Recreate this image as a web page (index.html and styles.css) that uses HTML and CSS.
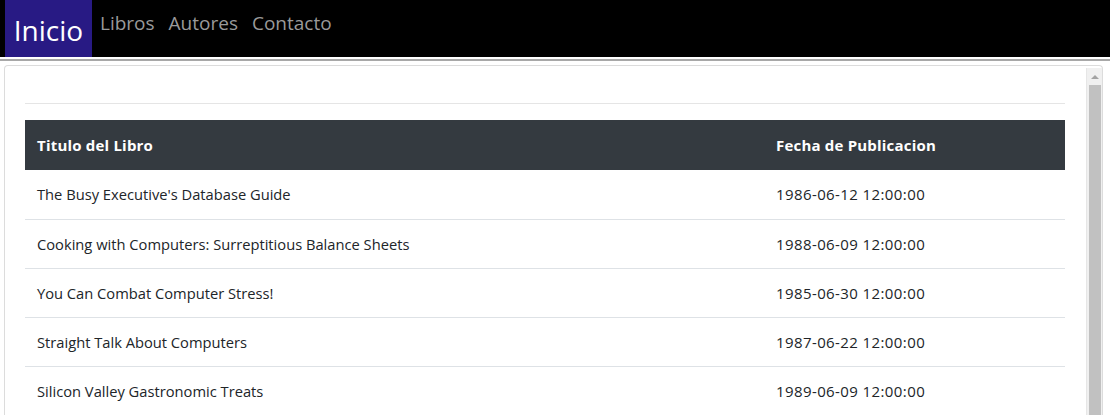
FILE: index.html
```html
<!DOCTYPE html>
<html lang="es">
<head>
<meta charset="utf-8">
<title>Libros</title>
<link rel="stylesheet" href="styles.css">
</head>
<body>
<nav class="nav">
  <a class="nav-home" href="#">Inicio</a>
  <a class="nav-link" href="#">Libros</a>
  <a class="nav-link" href="#">Autores</a>
  <a class="nav-link" href="#">Contacto</a>
</nav>
<div class="sep"></div>
<div class="frame">
  <div class="frame-content">
    <hr class="rule">
    <table class="books">
      <thead>
        <tr><th class="col-title">Titulo del Libro</th><th>Fecha de Publicacion</th></tr>
      </thead>
      <tbody>
        <tr><td>The Busy Executive's Database Guide</td><td class="date">1986-06-12 12:00:00</td></tr>
        <tr><td>Cooking with Computers: Surreptitious Balance Sheets</td><td class="date">1988-06-09 12:00:00</td></tr>
        <tr><td>You Can Combat Computer Stress!</td><td class="date">1985-06-30 12:00:00</td></tr>
        <tr><td>Straight Talk About Computers</td><td class="date">1987-06-22 12:00:00</td></tr>
        <tr><td>Silicon Valley Gastronomic Treats</td><td class="date">1989-06-09 12:00:00</td></tr>
      </tbody>
    </table>
  </div>
  <div class="scrollbar">
    <div class="sb-btn"><span class="sb-arrow"></span></div>
    <div class="sb-thumb"></div>
  </div>
</div>
</body>
</html>
```

FILE: styles.css
```css
html, body {
  margin: 0;
  padding: 0;
  background: #fff;
  height: 415px;
  overflow: hidden;
}
body {
  font-family: "Open Sans", "Noto Sans", sans-serif;
  color: #212529;
}
.nav {
  display: flex;
  align-items: flex-start;
  height: 57px;
  background: #000;
  padding-left: 5px;
}
.nav-home {
  display: block;
  width: 87px;
  height: 57px;
  box-sizing: border-box;
  padding: 13px 0 0 0;
  text-align: center;
  background: #281a84;
  color: #fff;
  font-size: 28px;
  line-height: 34px;
  text-decoration: none;
}
.nav-link {
  display: block;
  margin-left: 8px;
  margin-right: 6px;
  padding-top: 9px;
  color: #9a9a9a;
  font-size: 19px;
  line-height: 28px;
  text-decoration: none;
}
.sep {
  height: 2px;
  margin-top: 2px;
  background: #a8a8a8;
}
.frame {
  display: flex;
  margin: 4px 7px 0 4px;
  height: 349px;
  border: 1px solid #dcdcdc;
  border-bottom: 0;
  border-radius: 4px 4px 0 0;
  overflow: hidden;
}
.frame-content {
  flex: 1;
  padding: 0 21px 0 20px;
  overflow: hidden;
}
.rule {
  margin: 37px 0 16px 0;
  border: 0;
  border-top: 1px solid #e5e5e5;
}
.books {
  width: 100%;
  border-collapse: collapse;
  font-size: 14.7px;
}
.books th {
  background: #343a40;
  color: #fff;
  font-weight: 700;
  font-size: 15px;
  letter-spacing: 0.2px;
  text-align: left;
  height: 50px;
  padding: 0 12px;
  box-sizing: border-box;
}
.books .col-title {
  width: 739px;
}
.books td {
  height: 49px;
  padding: 0 12px;
  box-sizing: border-box;
  border-bottom: 1px solid #dee2e6;
  font-weight: 400;
}
.books .date {
  font-size: 15px;
  letter-spacing: 0.4px;
}
.scrollbar {
  width: 15px;
  display: flex;
  flex-direction: column;
  background: #f0f0f0;
  border-left: 1px solid #e6e6e6;
  margin-top: 2px;
}
.sb-btn {
  height: 17px;
  display: flex;
  align-items: center;
  justify-content: center;
}
.sb-arrow {
  width: 0;
  height: 0;
  border-left: 4px solid transparent;
  border-right: 4px solid transparent;
  border-bottom: 4px solid #a3a3a3;
}
.sb-thumb {
  flex: 1;
  margin: 0 1px 0 2px;
  background: #c1c1c1;
}
```
